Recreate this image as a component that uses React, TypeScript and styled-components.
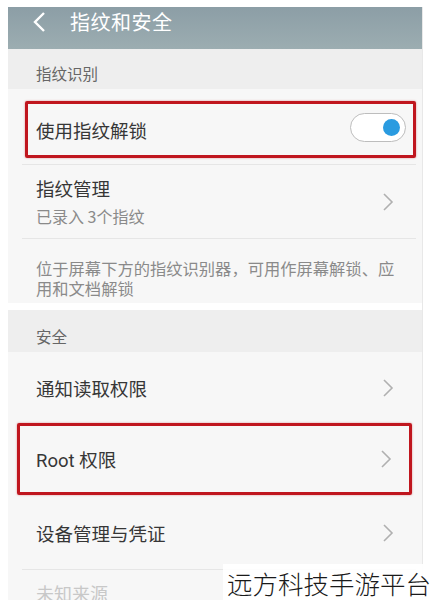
import React, { useState } from 'react'
import styled, { createGlobalStyle } from 'styled-components'

const GlobalStyle = createGlobalStyle`
  html, body {
    margin: 0;
    padding: 0;
    background: #ffffff;
    font-family: 'Noto Sans CJK SC', 'Noto Sans', sans-serif;
  }
`

const Page = styled.div`
  position: relative;
  height: 600px;
  overflow: hidden;
  padding: 7px 8px 0 8px;
  box-sizing: border-box;
  background: #ffffff;
`

const Screen = styled.div`
  display: flex;
  flex-direction: column;
  background: #f7f7f7;
  border-right: 1px solid #e8e8e8;
`

const TopBar = styled.div`
  display: flex;
  align-items: flex-start;
  height: 42px;
  box-sizing: border-box;
  background: linear-gradient(#8c9ea6, #9cadb1);
  color: #ffffff;
  padding: 1px 0 0 24px;
  gap: 24px;
`

const Title = styled.div`
  font-size: 20px;
  line-height: 28px;
  letter-spacing: 0.5px;
`

const SectionHead = styled.div<{ $h: number }>`
  display: flex;
  align-items: center;
  height: ${p => p.$h}px;
  background: #eeeeee;
  padding-left: 28px;
  padding-top: ${p => (p.$h > 40 ? 10 : 8)}px;
  box-sizing: border-box;
  font-size: 15.5px;
  color: #666666;
`

const Row = styled.div<{ $h: number; $line?: boolean }>`
  display: flex;
  flex-direction: column;
  justify-content: center;
  height: ${p => p.$h}px;
  box-sizing: border-box;
  margin-left: 14px;
  margin-right: 6px;
  padding-left: 14px;
  padding-right: 22px;
  border-bottom: ${p => (p.$line ? '1.5px solid #e6e6e6' : 'none')};
`

const Highlight = styled.div<{ $m: string }>`
  display: flex;
  align-items: center;
  justify-content: space-between;
  flex: 1;
  margin: ${p => p.$m};
  border: 3px solid #c0161e;
  border-radius: 2px;
  box-shadow: 0 0 2px rgba(192, 22, 30, 0.5);
`

const Line = styled.div`
  display: flex;
  align-items: center;
  justify-content: space-between;
`

const Label = styled.div`
  font-size: 18.5px;
  color: #363636;
  font-family: Roboto, 'Noto Sans CJK SC', sans-serif;
`

const Sub = styled.div`
  font-size: 16px;
  color: #8a8a8a;
  margin-top: 3px;
`

const Note = styled.div`
  box-sizing: border-box;
  height: 71px;
  padding: 19px 20px 0 28px;
  font-size: 16.3px;
  line-height: 20px;
  color: #8a8a8a;
  border-bottom: 7px solid #ffffff;
`

const Toggle = styled.button<{ $on: boolean }>`
  position: relative;
  width: 56px;
  height: 29px;
  border-radius: 15px;
  border: 1.5px solid #bdbdbd;
  background: #ffffff;
  padding: 0;
  cursor: pointer;
  &::after {
    content: '';
    position: absolute;
    top: 5px;
    left: ${p => (p.$on ? '32px' : '6px')};
    width: 17px;
    height: 17px;
    border-radius: 50%;
    background: ${p => (p.$on ? '#2a9be0' : '#bdbdbd')};
  }
`

const Faded = styled.div`
  font-size: 18px;
  color: #c8c8c8;
  padding-left: 28px;
  margin-top: 10px;
`

const Watermark = styled.div`
  position: absolute;
  right: 0;
  bottom: 0;
  padding: 0 0 0 4px;
  height: 36px;
  display: flex;
  align-items: center;
  background: rgba(255, 255, 255, 0.92);
  font-size: 25.5px;
  color: #1a1a1a;
  font-family: 'Noto Sans CJK SC', sans-serif;
  font-weight: 300;
`

const Chevron = () => (
  <svg width="12" height="20" viewBox="0 0 12 20">
    <path d="M2 2 L10 10 L2 18" fill="none" stroke="#b0b0b0" strokeWidth="1.6" />
  </svg>
)

const Back = () => (
  <svg width="14" height="28" viewBox="0 0 14 28">
    <path d="M12 5 L3 14 L12 23" fill="none" stroke="#ffffff" strokeWidth="2.4" />
  </svg>
)

export default function App() {
  const [on, setOn] = useState(true)

  return (
    <>
      <GlobalStyle />
      <Page>
        <Screen>
          <TopBar>
            <Back />
            <Title>指纹和安全</Title>
          </TopBar>
          <SectionHead $h={40}>指纹识别</SectionHead>
          <Row $h={76} $line style={{ paddingLeft: 0, paddingRight: 0 }}>
            <Highlight $m="12px 0 6px 3px">
              <Label style={{ paddingLeft: 8 }}>使用指纹解锁</Label>
              <span style={{ paddingRight: 7 }}>
                <Toggle $on={on} onClick={() => setOn(!on)} />
              </span>
            </Highlight>
          </Row>
          <Row $h={74} $line>
            <Line>
              <div>
                <Label>指纹管理</Label>
                <Sub>已录入 3个指纹</Sub>
              </div>
              <Chevron />
            </Line>
          </Row>
          <Note>位于屏幕下方的指纹识别器，可用作屏幕解锁、应用和文档解锁</Note>
          <SectionHead $h={42}>安全</SectionHead>
          <Row $h={71}>
            <Line>
              <Label>通知读取权限</Label>
              <Chevron />
            </Line>
          </Row>
          <Row $h={74} style={{ marginLeft: 6, paddingLeft: 0, paddingRight: 0 }}>
            <Highlight $m="0 4px 2px 3px">
              <Label style={{ paddingLeft: 16 }}>Root 权限</Label>
              <span style={{ paddingRight: 17, display: 'flex' }}>
                <Chevron />
              </span>
            </Highlight>
          </Row>
          <Row $h={73} $line>
            <Line>
              <Label>设备管理与凭证</Label>
              <Chevron />
            </Line>
          </Row>
          <Faded>未知来源</Faded>
        </Screen>
        <Watermark>远方科技手游平台</Watermark>
      </Page>
    </>
  )
}
